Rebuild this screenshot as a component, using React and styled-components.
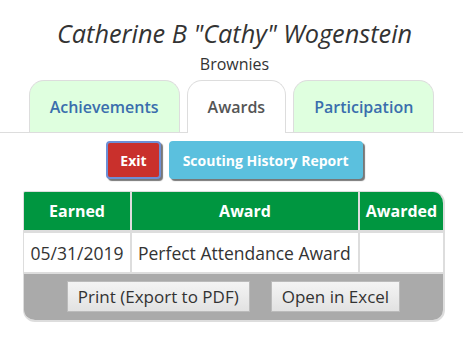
import React from 'react';
import styled, { createGlobalStyle } from 'styled-components';

const GlobalStyle = createGlobalStyle`
    body {
        margin: 0;
        background: #fff;
        font-family: "Open Sans", "Noto Sans", sans-serif;
        color: #333;
    }
`;

const Page = styled.div`
    width: 463px;
    padding-top: 18px;
`;

const Name = styled.h1`
    margin: 0;
    padding-left: 6px;
    text-align: center;
    font-size: 25.3px;
    font-style: italic;
    font-weight: 400;
    line-height: 30px;
    color: #333;
`;

const Group = styled.div`
    padding-left: 6px;
    text-align: center;
    font-size: 16px;
    line-height: 22px;
    margin-top: 5px;
`;

const TabBar = styled.div`
    display: flex;
    justify-content: center;
    gap: 7px;
    margin-top: 5px;
    border-bottom: 1px solid #ddd;
`;

const Tab = styled.div`
    box-sizing: border-box;
    display: flex;
    align-items: center;
    justify-content: center;
    padding: 0 20px;
    border: 1px solid #ddd;
    border-bottom: none;
    border-radius: 15px 15px 0 0;
    font-size: 16px;
    font-weight: 600;
    margin-bottom: ${props => props.active ? '-1px' : '0'};
    height: ${props => props.active ? '53px' : '52px'};
    background: ${props => props.active ? '#fff' : '#dfffdf'};
    color: ${props => props.active ? '#555' : '#3a6ead'};
`;

const Actions = styled.div`
    display: flex;
    justify-content: center;
    gap: 8px;
    margin-top: 8px;
    padding-left: 6px;
`;

const ActionButton = styled.button`
    height: 38px;
    padding: 0 12px;
    font-family: inherit;
    font-size: 14px;
    font-weight: 700;
    color: #fff;
    border-radius: 4px;
    box-shadow: 2px 2px 1px #777;
    cursor: pointer;
    ${props => props.danger ? `
        background: #c9302c;
        border: 2px solid #6d8fd6;
    ` : `
        background: #5bc0de;
        border: 2px solid #5bc0de;
    `}
`;

const TableBox = styled.div`
    margin: 12px 0 0 23px;
    width: 422px;
    border: 2px solid #ddd;
    border-left-width: 1px;
    border-top-width: 1px;
    border-radius: 2px 12px 12px 12px;
    overflow: hidden;
    box-sizing: border-box;
`;

const Table = styled.table`
    width: 100%;
    border-collapse: collapse;
    table-layout: fixed;
`;

const HeadCell = styled.th`
    height: 38px;
    padding: 0;
    background: #009640;
    color: #fff;
    font-size: 16px;
    font-weight: 700;
    text-align: center;
    white-space: nowrap;
    border-left: 2px solid #ddd;
    border-bottom: 3px solid #ddd;
    &:first-child { border-left: none; }
    width: ${props => props.w ? props.w + 'px' : 'auto'};
`;

const Cell = styled.td`
    height: 39px;
    padding: 0 6px;
    background: #fff;
    font-size: 17.5px;
    color: #333;
    white-space: nowrap;
    border-left: 2px solid #ddd;
    border-bottom: 2px solid #ddd;
    text-align: ${props => props.center ? 'center' : 'left'};
    &:first-child { border-left: none; }
`;

const Footer = styled.div`
    background: #aaa;
    display: flex;
    justify-content: center;
    gap: 21px;
    padding: 7px 0 8px;
`;

const ExportButton = styled.button`
    height: 31px;
    padding: 0 10px;
    font-family: inherit;
    font-size: 17px;
    color: #333;
    background: linear-gradient(#f4f4f4, #e2e2e2);
    border: 1px solid #bbb;
    border-radius: 0;
    cursor: pointer;
`;

const App = () => {
    return (
        <>
            <GlobalStyle />
            <Page>
                <Name>Catherine B "Cathy" Wogenstein</Name>
                <Group>Brownies</Group>
                <TabBar>
                    <Tab>Achievements</Tab>
                    <Tab active>Awards</Tab>
                    <Tab>Participation</Tab>
                </TabBar>
                <Actions>
                    <ActionButton danger>Exit</ActionButton>
                    <ActionButton>Scouting History Report</ActionButton>
                </Actions>
                <TableBox>
                    <Table>
                        <thead>
                            <tr>
                                <HeadCell w={106}>Earned</HeadCell>
                                <HeadCell w={226}>Award</HeadCell>
                                <HeadCell>Awarded</HeadCell>
                            </tr>
                        </thead>
                        <tbody>
                            <tr>
                                <Cell center>05/31/2019</Cell>
                                <Cell>Perfect Attendance Award</Cell>
                                <Cell></Cell>
                            </tr>
                        </tbody>
                    </Table>
                    <Footer>
                        <ExportButton>Print (Export to PDF)</ExportButton>
                        <ExportButton>Open in Excel</ExportButton>
                    </Footer>
                </TableBox>
            </Page>
        </>
    );
};

export default App;
